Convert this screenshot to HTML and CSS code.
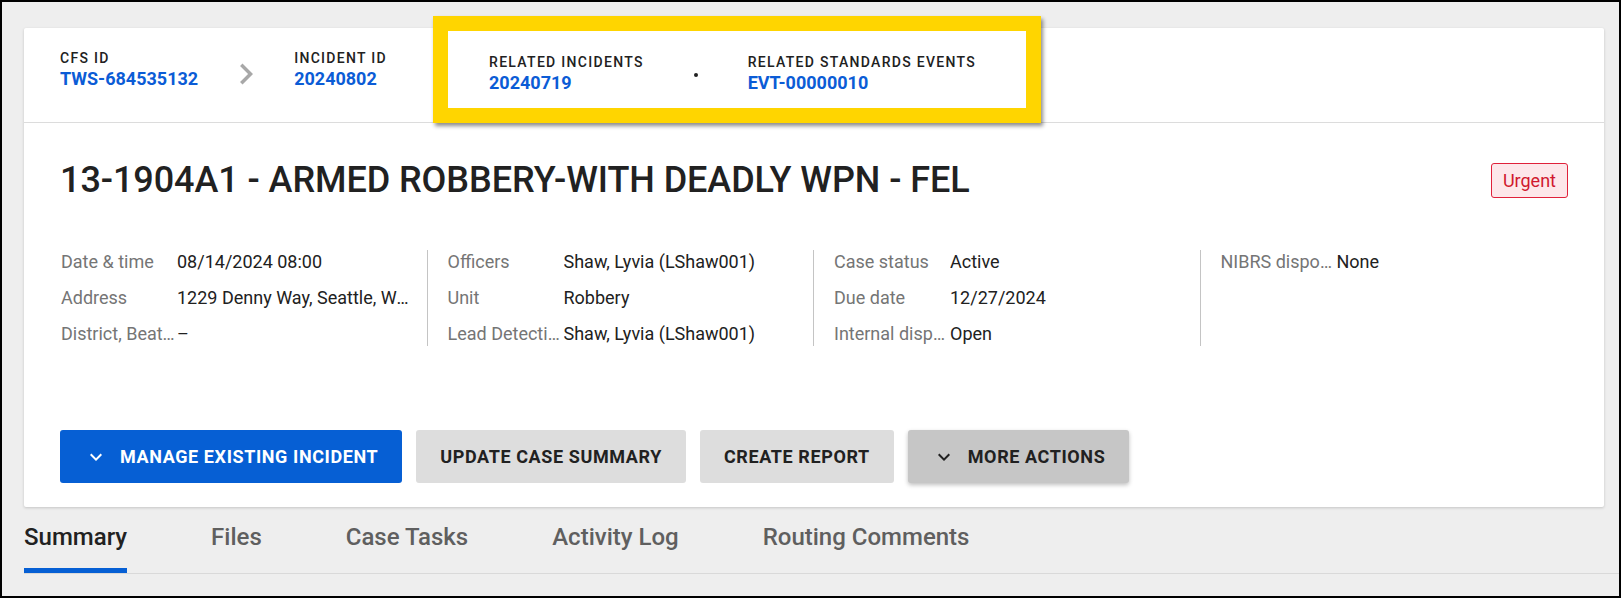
FILE: index.html
```html
<!DOCTYPE html>
<html>

<head>
    <meta charset="UTF-8">
    <link rel="stylesheet" href="styles.css">
    <title>Case 13-1904A1</title>
</head>

<body>
    <div class="screen">
        <div class="case-card">
            <div class="case-header">
                <div class="id-item">
                    <div class="id-label">CFS ID</div>
                    <a class="id-value" href="#">TWS-684535132</a>
                </div>
                <svg class="crumb-sep" viewBox="0 0 24 24" width="42" height="42">
                    <path d="M10 6L8.59 7.41 13.17 12l-4.58 4.59L10 18l6-6z" />
                </svg>
                <div class="id-item">
                    <div class="id-label">INCIDENT ID</div>
                    <a class="id-value" href="#">20240802</a>
                </div>
                <div class="related-box">
                    <div class="id-item">
                        <div class="id-label">RELATED INCIDENTS</div>
                        <a class="id-value" href="#">20240719</a>
                    </div>
                    <span class="related-dot"></span>
                    <div class="id-item">
                        <div class="id-label">RELATED STANDARDS EVENTS</div>
                        <a class="id-value" href="#">EVT-00000010</a>
                    </div>
                </div>
            </div>

            <div class="case-body">
                <div class="title-row">
                    <h1 class="case-title">13-1904A1 - ARMED ROBBERY-WITH DEADLY WPN - FEL</h1>
                    <span class="badge-urgent">Urgent</span>
                </div>

                <div class="details">
                    <div class="details-col">
                        <div class="detail-row"><span class="detail-label">Date &amp; time</span><span class="detail-value">08/14/2024 08:00</span></div>
                        <div class="detail-row"><span class="detail-label">Address</span><span class="detail-value">1229 Denny Way, Seattle, WA 98109</span></div>
                        <div class="detail-row"><span class="detail-label">District, Beat, RA</span><span class="detail-value">–</span></div>
                    </div>
                    <div class="details-col">
                        <div class="detail-row"><span class="detail-label">Officers</span><span class="detail-value">Shaw, Lyvia (LShaw001)</span></div>
                        <div class="detail-row"><span class="detail-label">Unit</span><span class="detail-value">Robbery</span></div>
                        <div class="detail-row"><span class="detail-label">Lead Detective</span><span class="detail-value">Shaw, Lyvia (LShaw001)</span></div>
                    </div>
                    <div class="details-col">
                        <div class="detail-row"><span class="detail-label">Case status</span><span class="detail-value">Active</span></div>
                        <div class="detail-row"><span class="detail-label">Due date</span><span class="detail-value">12/27/2024</span></div>
                        <div class="detail-row"><span class="detail-label">Internal disposition</span><span class="detail-value">Open</span></div>
                    </div>
                    <div class="details-col">
                        <div class="detail-row"><span class="detail-label">NIBRS disposition</span><span class="detail-value">None</span></div>
                    </div>
                </div>

                <div class="actions">
                    <button class="btn btn-primary">
                        <svg class="btn-icon" viewBox="0 0 24 24" width="24" height="24"><path d="M16.59 8.59L12 13.17 7.41 8.59 6 10l6 6 6-6z" /></svg>
                        Manage existing incident
                    </button>
                    <button class="btn btn-grey">Update case summary</button>
                    <button class="btn btn-grey">Create report</button>
                    <button class="btn btn-grey btn-pressed">
                        <svg class="btn-icon" viewBox="0 0 24 24" width="24" height="24"><path d="M16.59 8.59L12 13.17 7.41 8.59 6 10l6 6 6-6z" /></svg>
                        More actions
                    </button>
                </div>
            </div>
        </div>

        <nav class="tabs">
            <a class="tab active" href="#">Summary</a>
            <a class="tab" href="#">Files</a>
            <a class="tab" href="#">Case Tasks</a>
            <a class="tab" href="#">Activity Log</a>
            <a class="tab" href="#">Routing Comments</a>
        </nav>
    </div>
</body>

</html>
```

FILE: styles.css
```css
* {
    box-sizing: border-box;
}

body {
    margin: 0;
    padding: 2px;
    background: #000;
    font-family: Roboto, "Liberation Sans", Arial, sans-serif;
    color: #212121;
}

.screen {
    height: 594px;
    background: #eeeeee;
    padding-top: 26px;
    overflow: hidden;
}

.case-card {
    margin: 0 15px 0 22px;
    background: #fff;
    border-radius: 2px;
    box-shadow: 0 1px 3px rgba(0, 0, 0, 0.18);
}

/* top strip with ids */
.case-header {
    display: flex;
    align-items: flex-start;
    padding: 22px 36px 31px;
    border-bottom: 1px solid #dcdcdc;
}

.id-item {
    display: flex;
    flex-direction: column;
}

.id-label {
    font-size: 14px;
    line-height: 16px;
    font-weight: 500;
    letter-spacing: 1.3px;
    color: #212121;
    margin-bottom: 1px;
}

.id-value {
    font-size: 18px;
    line-height: 24px;
    font-weight: 700;
    color: #0b5cd6;
    text-decoration: none;
}

.crumb-sep {
    fill: #a8a8a8;
    margin: 3px 27px -4px;
}

.related-box {
    display: flex;
    align-items: center;
    gap: 50px;
    margin: -34px 0 -32px 46px;
    padding: 23px 50px 13px 41px;
    border: 15px solid #ffd500;
    background: #fff;
    box-shadow: 2px 3px 4px rgba(0, 0, 0, 0.45);
}

.related-dot {
    width: 4px;
    height: 4px;
    border-radius: 50%;
    background: #212121;
}

/* body */
.case-body {
    padding: 35px 36px 24px;
}

.title-row {
    display: flex;
    align-items: center;
    justify-content: space-between;
    margin-bottom: 48px;
}

.case-title {
    margin: 0;
    font-size: 36px;
    line-height: 44px;
    font-weight: 500;
    letter-spacing: -0.07px;
    color: #212121;
}

.badge-urgent {
    font-size: 18px;
    line-height: 23px;
    padding: 5px 11px;
    border: 1px solid #e0213b;
    border-radius: 3px;
    background: #fde7ea;
    color: #d0192f;
}

.details {
    display: flex;
    margin: 0 -18px 0 -20px;
}

.details-col {
    flex: 1 1 0;
    min-width: 0;
    padding: 0 18px 0 20px;
    border-left: 1px solid #c4c4c4;
}

.details-col:first-child {
    border-left-color: transparent;
}

.detail-row {
    display: flex;
    font-size: 18px;
    line-height: 24px;
    margin-bottom: 12px;
}

.detail-row:last-child {
    margin-bottom: 0;
}

.detail-label {
    flex: 0 0 116px;
    color: #757575;
    white-space: nowrap;
    overflow: hidden;
    text-overflow: ellipsis;
}

.detail-value {
    flex: 1;
    min-width: 0;
    color: #212121;
    white-space: nowrap;
    overflow: hidden;
    text-overflow: ellipsis;
}

.actions {
    display: flex;
    gap: 14px;
    margin-top: 84px;
}

.btn {
    display: inline-flex;
    align-items: center;
    height: 53px;
    padding: 0 24px;
    border: none;
    border-radius: 3px;
    font-family: Roboto, "Liberation Sans", Arial, sans-serif;
    font-size: 18px;
    font-weight: 700;
    letter-spacing: 0.6px;
    text-transform: uppercase;
}

.btn-icon {
    margin-right: 12px;
    fill: currentColor;
}

.btn-primary {
    background: #065fd4;
    color: #fff;
}

.btn-grey {
    background: #dddddd;
    color: #212121;
}

.btn-pressed {
    background: #c6c6c6;
    box-shadow: 0 2px 4px rgba(0, 0, 0, 0.25);
}

/* tabs under card */
.tabs {
    display: flex;
    gap: 84px;
    margin-left: 22px;
    border-bottom: 1px solid #d9d9d9;
}

.tab {
    padding: 16px 0 17px;
    font-size: 24px;
    line-height: 28px;
    font-weight: 500;
    color: #5f5f5f;
    text-decoration: none;
    border-bottom: 5px solid transparent;
}

.tab.active {
    color: #212121;
    border-bottom-color: #065fd4;
}
```
